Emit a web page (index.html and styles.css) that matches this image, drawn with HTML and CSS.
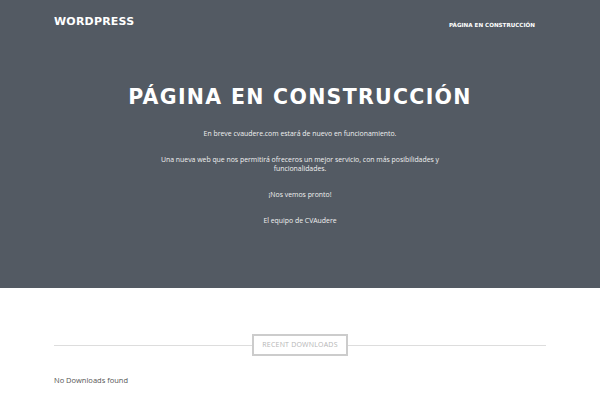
FILE: index.html
```html
<!DOCTYPE html>
<html lang="es">
<head>
<meta charset="utf-8">
<title>Página en construcción</title>
<link rel="stylesheet" href="styles.css">
</head>
<body>
<section class="hero">
  <header class="topbar">
    <div class="brand">WORDPRESS</div>
    <nav class="nav"><a href="#">PÁGINA EN CONSTRUCCIÓN</a></nav>
  </header>
  <div class="hero-body">
    <h1 class="title">PÁGINA EN CONSTRUCCIÓN</h1>
    <p>En breve cvaudere.com estará de nuevo en funcionamiento.</p>
    <p>Una nueva web que nos permitirá ofreceros un mejor servicio, con más posibilidades y<br>funcionalidades.</p>
    <p>¡Nos vemos pronto!</p>
    <p>El equipo de CVAudere</p>
  </div>
</section>
<section class="downloads">
  <div class="divider"><span class="divider-label">RECENT DOWNLOADS</span></div>
  <p class="empty">No Downloads found</p>
</section>
</body>
</html>
```
FILE: styles.css
```css
html, body {
  margin: 0;
  padding: 0;
  background: #ffffff;
  font-family: "Open Sans", "DejaVu Sans", sans-serif;
}
.hero {
  background: #535a63;
  height: 288px;
  color: #ffffff;
}
.topbar {
  display: flex;
  justify-content: space-between;
  align-items: center;
  padding: 14px 65px 0 54px;
  height: 14px;
}
.brand {
  font-family: "DejaVu Sans", sans-serif;
  font-weight: bold;
  font-size: 11px;
  letter-spacing: 0.2px;
}
.nav a {
  color: #ffffff;
  text-decoration: none;
  font-family: "DejaVu Sans", sans-serif;
  font-weight: bold;
  font-size: 5.6px;
}
.hero-body {
  text-align: center;
  padding-top: 54px;
}
.title {
  margin: 0 0 17px 0;
  font-family: "DejaVu Sans", sans-serif;
  font-weight: bold;
  font-size: 20.5px;
  letter-spacing: 1.3px;
  line-height: 30px;
}
.hero-body p {
  margin: 0 0 17px 0;
  font-size: 6.9px;
  line-height: 9px;
  color: #f0f0f0;
}
.downloads {
  padding: 46px 54px 0 54px;
}
.divider {
  display: flex;
  align-items: center;
  justify-content: center;
  height: 22px;
}
.divider::before, .divider::after {
  content: "";
  flex: 1;
  height: 1px;
  background: #dddddd;
}
.divider-label {
  border: 2px solid #cccccc;
  padding: 0 8px;
  height: 18px;
  line-height: 18px;
  font-size: 7px;
  color: #b5b5b5;
  letter-spacing: 0.2px;
}
.empty {
  margin: 19px 0 0 0;
  font-size: 7.5px;
  color: #555555;
}
```
